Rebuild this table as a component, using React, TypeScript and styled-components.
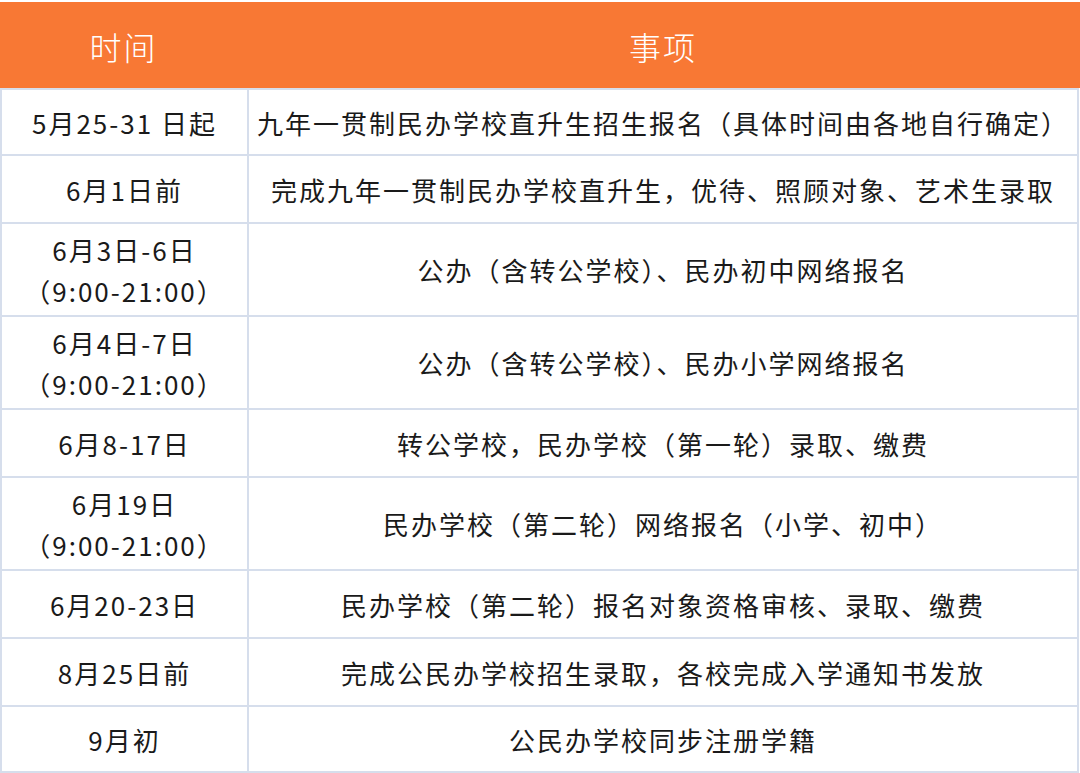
import React from 'react'
import styled, { createGlobalStyle } from 'styled-components'

type Row = { time: string[]; item: string; h: number }

const rows: Row[] = [
  { time: ['5月25-31 日起'], item: '九年一贯制民办学校直升生招生报名（具体时间由各地自行确定）', h: 64 },
  { time: ['6月1日前'], item: '完成九年一贯制民办学校直升生，优待、照顾对象、艺术生录取', h: 66 },
  { time: ['6月3日-6日', '（9:00-21:00）'], item: '公办（含转公学校）、民办初中网络报名', h: 91 },
  { time: ['6月4日-7日', '（9:00-21:00）'], item: '公办（含转公学校）、民办小学网络报名', h: 91 },
  { time: ['6月8-17日'], item: '转公学校，民办学校（第一轮）录取、缴费', h: 66 },
  { time: ['6月19日', '（9:00-21:00）'], item: '民办学校（第二轮）网络报名（小学、初中）', h: 91 },
  { time: ['6月20-23日'], item: '民办学校（第二轮）报名对象资格审核、录取、缴费', h: 66 },
  { time: ['8月25日前'], item: '完成公民办学校招生录取，各校完成入学通知书发放', h: 66 },
  { time: ['9月初'], item: '公民办学校同步注册学籍', h: 64 },
]

const GlobalStyle = createGlobalStyle`
  html, body {
    margin: 0;
    padding: 0;
    background: #ffffff;
  }
  body {
    font-family: "Noto Sans CJK SC", "Noto Sans", sans-serif;
  }
`

const Page = styled.div`
  width: 1080px;
  height: 773px;
  padding-top: 2px;
  box-sizing: border-box;
  overflow: hidden;
`

const Header = styled.div`
  display: grid;
  grid-template-columns: 247px 832px;
  height: 86px;
  background: #f87834;
  color: #ffffff;
`

const HeaderCell = styled.div`
  display: flex;
  align-items: center;
  justify-content: center;
  font-family: "Liberation Serif", "Noto Sans CJK SC", serif;
  font-size: 32px;
  font-weight: 300;
  letter-spacing: 2px;
  padding-top: 2px;
`

const Body = styled.div`
  display: grid;
  grid-template-columns: 245px 828px;
  gap: 2px;
  width: 1079px;
  padding: 2px;
  box-sizing: border-box;
  background: #d6deec;
`

const Cell = styled.div<{ $h: number }>`
  height: ${({ $h }) => $h}px;
  background: #ffffff;
  display: flex;
  flex-direction: column;
  align-items: center;
  justify-content: center;
  color: #1a1a1a;
  font-size: 26px;
  letter-spacing: 2px;
  line-height: 41px;
  white-space: nowrap;
  text-align: center;
`

const TimeLine = styled.span`
  display: block;
`

export default function App() {
  return (
    <Page>
      <GlobalStyle />
      <Header>
        <HeaderCell>时间</HeaderCell>
        <HeaderCell>事项</HeaderCell>
      </Header>
      <Body>
        {rows.map((r, i) => (
          <React.Fragment key={i}>
            <Cell $h={r.h}>
              {r.time.map((t, j) => (
                <TimeLine key={j}>{t}</TimeLine>
              ))}
            </Cell>
            <Cell $h={r.h}>{r.item}</Cell>
          </React.Fragment>
        ))}
      </Body>
    </Page>
  )
}
